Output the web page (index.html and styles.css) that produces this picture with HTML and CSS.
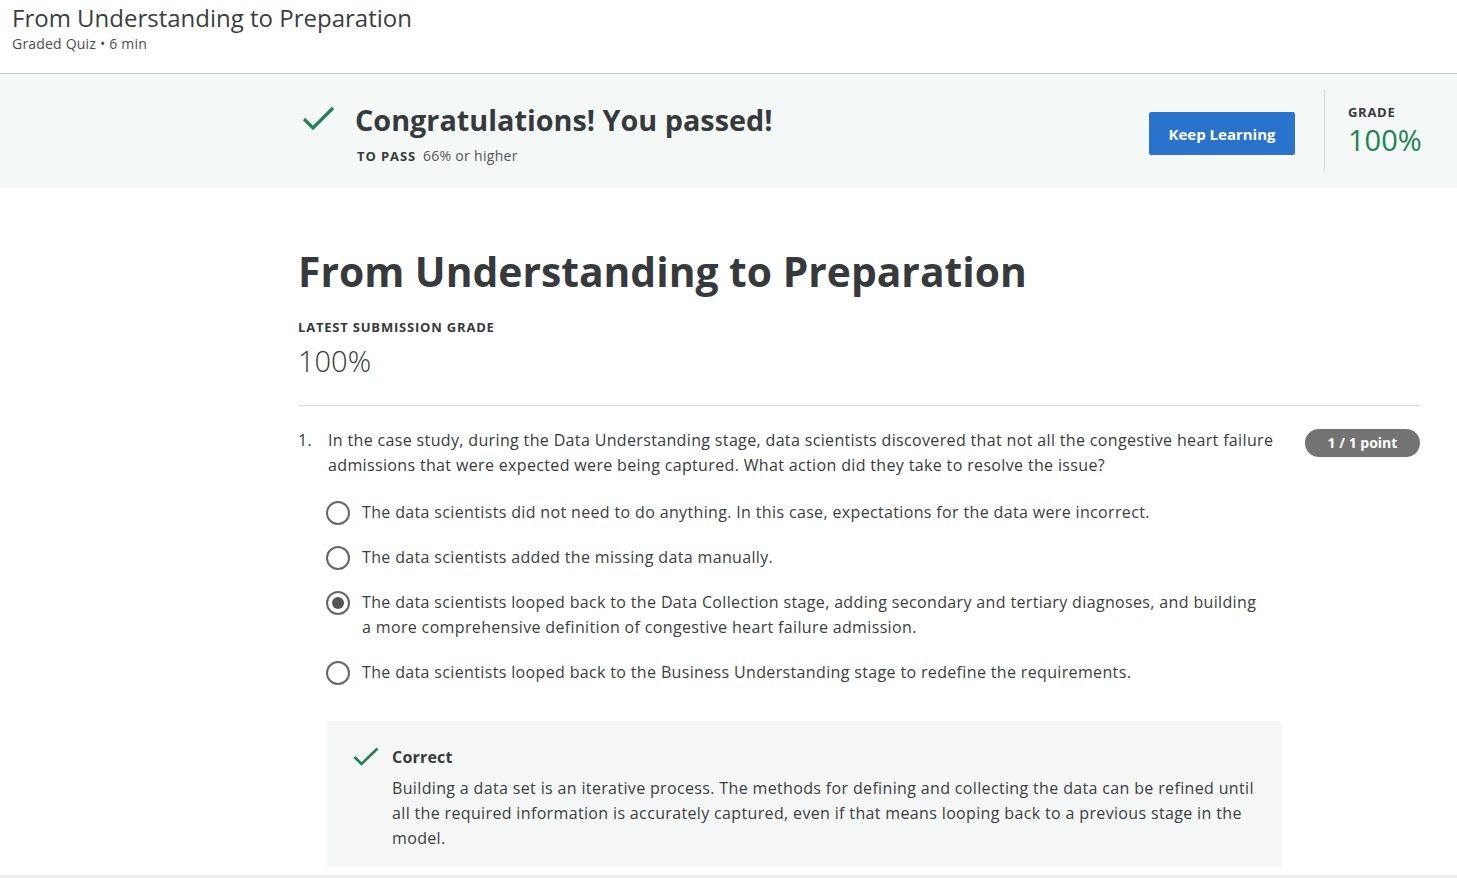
FILE: index.html
```html
<!DOCTYPE html>
<html>
<head>
<meta charset="utf-8">
<link rel="stylesheet" href="styles.css">
</head>
<body>
<header class="top">
  <div class="top-title">From Understanding to Preparation</div>
  <div class="top-sub">Graded Quiz • 6 min</div>
</header>
<section class="banner">
  <div class="banner-inner">
    <div class="pass">
      <svg class="pass-check" width="34" height="28" viewBox="0 0 34 28"><path d="M2 14 L11 23 L31 3" fill="none" stroke="#1f8354" stroke-width="3.2"/></svg>
      <div class="pass-text">
        <div class="pass-title">Congratulations! You passed!</div>
        <div class="pass-req"><span class="pass-label">TO PASS</span> 66% or higher</div>
      </div>
    </div>
    <button class="keep">Keep Learning</button>
    <div class="grade">
      <div class="grade-label">GRADE</div>
      <div class="grade-value">100%</div>
    </div>
  </div>
</section>
<main class="main">
  <h1 class="title">From Understanding to Preparation</h1>
  <div class="latest-label">LATEST SUBMISSION GRADE</div>
  <div class="latest-value">100%</div>
  <hr class="rule">
  <div class="question">
    <div class="q-body">
      <div class="q-head">
        <span class="q-num">1.</span>
        <p class="q-text">In the case study, during the Data Understanding stage, data scientists discovered that not all the congestive heart failure admissions that were expected were being captured. What action did they take to resolve the issue?</p>
      </div>
      <ul class="options">
        <li class="option"><span class="radio"></span><span class="opt-text">The data scientists did not need to do anything. In this case, expectations for the data were incorrect.</span></li>
        <li class="option"><span class="radio"></span><span class="opt-text">The data scientists added the missing data manually.</span></li>
        <li class="option"><span class="radio checked"></span><span class="opt-text">The data scientists looped back to the Data Collection stage, adding secondary and tertiary diagnoses, and building a more comprehensive definition of congestive heart failure admission.</span></li>
        <li class="option"><span class="radio"></span><span class="opt-text">The data scientists looped back to the Business Understanding stage to redefine the requirements.</span></li>
      </ul>
      <div class="feedback">
        <svg class="fb-check" width="26" height="20" viewBox="0 0 26 20"><path d="M1.5 10 L8.5 17 L24.5 1.5" fill="none" stroke="#1f8354" stroke-width="2.6"/></svg>
        <div class="fb-text">
          <div class="fb-title">Correct</div>
          <p class="fb-desc">Building a data set is an iterative process. The methods for defining and collecting the data can be refined until all the required information is accurately captured, even if that means looping back to a previous stage in the model.</p>
        </div>
      </div>
    </div>
    <div class="points">1 / 1 point</div>
  </div>
</main>
</body>
</html>
```

FILE: styles.css
```css
* { box-sizing: border-box; }
html, body { margin: 0; padding: 0; }
body {
  font-family: "Open Sans", "Noto Sans", sans-serif;
  color: #373a3c;
  background: #fff;
  width: 1457px;
  height: 878px;
  overflow: hidden;
  border-bottom: 3px solid #ececec;
}
.top {
  height: 74px;
  border-bottom: 1px solid #c9c9c9;
  padding: 2px 12px 0;
}
.top-title {
  font-size: 24px;
  line-height: 32px;
  color: #3b3e40;
}
.top-sub {
  font-size: 14px;
  letter-spacing: 0.2px;
  line-height: 20px;
  color: #4a4d4f;
}
.banner {
  background: #f4f8f7;
  height: 114px;
}
.banner-inner {
  display: flex;
  align-items: center;
  height: 100%;
  padding: 14px 37px 0 302px;
}
.pass {
  display: flex;
  align-items: flex-start;
  flex: 1;
  margin-top: -10px;
}
.pass-check { margin-top: 5px; margin-right: 19px; }
.pass-title {
  font-size: 28.8px;
  font-weight: 700;
  line-height: 40px;
  color: #373a3c;
}
.pass-req {
  margin-top: 6px;
  margin-left: 2px;
  font-size: 14px;
  letter-spacing: 0.3px;
  color: #555;
  line-height: 20px;
}
.pass-label {
  font-size: 13px;
  font-weight: 700;
  color: #373a3c;
  letter-spacing: 0.9px;
  margin-right: 3px;
}
.keep {
  font-family: inherit;
  background: #2a73cc;
  color: #fff;
  border: none;
  border-radius: 2px;
  font-size: 15px;
  font-weight: 700;
  width: 146px;
  height: 43px;
  margin-top: -9px;
  margin-right: 29px;
}
.grade {
  border-left: 1px solid #dcdcdc;
  height: 82px;
  margin-top: -15px;
  padding: 14px 0 0 23px;
  width: 96px;
}
.grade-label {
  font-size: 13px;
  font-weight: 700;
  letter-spacing: 0.7px;
  line-height: 16px;
  color: #373a3c;
}
.grade-value {
  font-size: 29px;
  line-height: 34px;
  margin-top: 3px;
  color: #1f8354;
  font-weight: 400;
}
.main {
  padding: 54px 37px 0 298px;
}
.title {
  margin: 0;
  font-size: 40.8px;
  font-weight: 700;
  line-height: 58px;
  color: #373a3c;
}
.latest-label {
  margin-top: 18px;
  font-size: 13px;
  font-weight: 700;
  letter-spacing: 0.8px;
  line-height: 18px;
}
.latest-value {
  margin-top: 7px;
  font-size: 29px;
  font-weight: 300;
  line-height: 36px;
}
.rule {
  margin: 26px 0 0;
  border: none;
  border-top: 1px solid #dcdcdc;
}
.question {
  display: flex;
  margin-top: 22px;
}
.q-body { width: 984px; }
.q-head { display: flex; }
.q-num {
  width: 30px;
  font-size: 16px;
  line-height: 25px;
  letter-spacing: 0.35px;
}
.q-text {
  margin: 0;
  flex: 1;
  font-size: 16px;
  line-height: 25px;
  letter-spacing: 0.35px;
}
.options {
  list-style: none;
  margin: 23px 0 0 28px;
  padding: 0;
}
.option {
  display: flex;
  align-items: flex-start;
  margin-bottom: 21px;
  padding-right: 16px;
}
.option:last-child { margin-bottom: 0; }
.radio {
  flex: none;
  width: 24px;
  height: 24px;
  border: 2px solid #666;
  border-radius: 50%;
  margin-right: 12px;
  position: relative;
}
.radio.checked::after {
  content: "";
  position: absolute;
  left: 4px;
  top: 4px;
  width: 12px;
  height: 12px;
  border-radius: 50%;
  background: #555;
}
.opt-text {
  font-size: 16px;
  line-height: 25px;
  letter-spacing: 0.35px;
  color: #3b3e40;
  margin-top: -1px;
}
.feedback {
  margin: 36px 0 0 29px;
  background: #f5f7f7;
  display: flex;
  padding: 25px 26px 16px 26px;
}
.fb-check { flex: none; margin-right: 13px; margin-top: 1px; }
.fb-title {
  font-size: 16px;
  font-weight: 700;
  line-height: 22px;
  letter-spacing: 0.2px;
}
.fb-desc {
  margin: 8px 0 0;
  font-size: 16px;
  line-height: 25px;
  letter-spacing: 0.35px;
  color: #3b3e40;
}
.points {
  margin-left: 23px;
  width: 115px;
  height: 28px;
  margin-top: 1px;
  background: #737373;
  color: #fff;
  border-radius: 14px;
  font-size: 14px;
  font-weight: 700;
  text-align: center;
  line-height: 28px;
}
```
